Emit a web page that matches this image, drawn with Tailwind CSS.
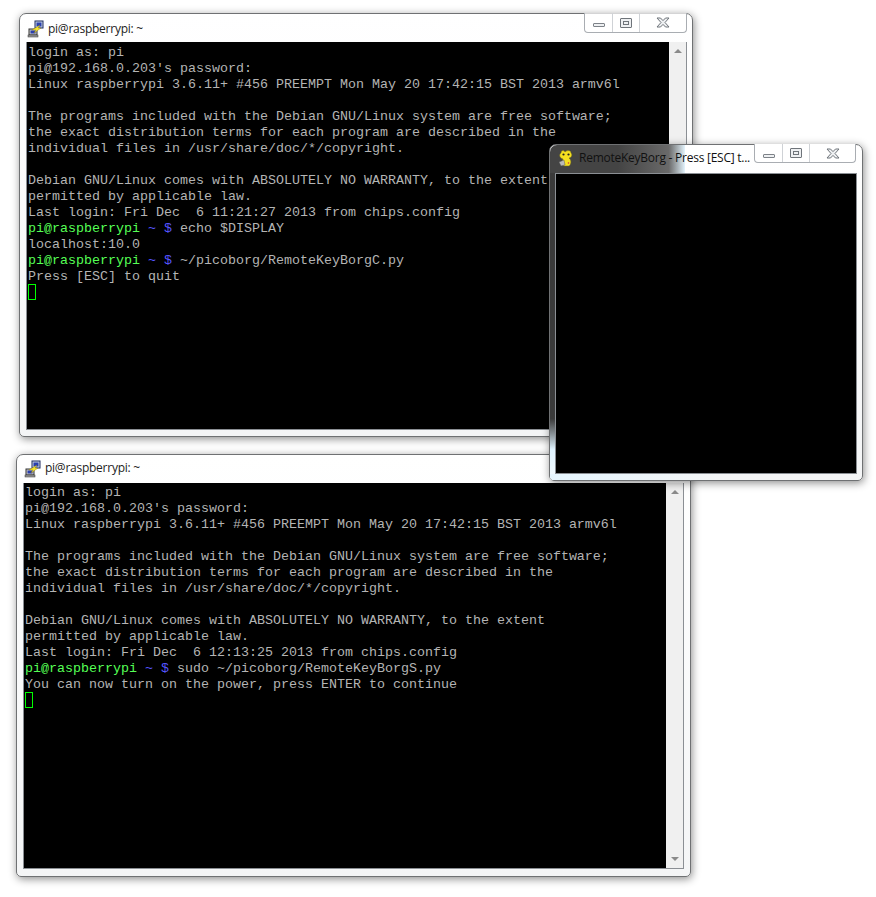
<!DOCTYPE html>
<html>
<head>
<meta charset="utf-8">
<script src="https://cdn.jsdelivr.net/npm/@tailwindcss/browser@4"></script>
</head>
<body class="bg-white">
<div class="relative w-[876px] h-[897px] overflow-hidden bg-white">

<!-- Window 1 -->
<section class="absolute left-[19px] top-[13px] w-[674px] h-[424px] rounded-t-[7px] rounded-b-[5px] border border-[#6f7173] bg-gradient-to-b from-white to-[#f4f5f6] shadow-[1px_2px_8px_rgba(0,0,0,0.45)] flex flex-col pl-[6px] pr-[5px] pb-[6px]">
  <header class="h-[28px] shrink-0 flex items-center gap-[3px] relative">
    <svg width="18" height="18" viewBox="0 0 18 18" class="shrink-0 ml-[1px] mt-[1px]"><rect x="8" y="1" width="8" height="7" fill="#c7d3e6" stroke="#1c2a5e"/><rect x="9.5" y="2.5" width="5" height="4" fill="#2a3fae"/><rect x="2" y="9" width="8" height="6" fill="#c9c9c9" stroke="#333"/><rect x="3.5" y="10.5" width="5" height="3" fill="#2a3fae"/><rect x="1" y="15" width="10" height="2" fill="#999" stroke="#333" stroke-width=".5"/><path d="M5 10 L13 5 L11 8 L14 8 L7 13 L9 10 Z" fill="#f7e62c" stroke="#8a7a10" stroke-width=".4"/></svg>
    <span class="font-['Open_Sans','Noto_Sans',sans-serif] text-[12px] text-[#222] tracking-[-0.25px] mt-[1px]">pi@raspberrypi: ~</span>
    <div class="absolute -top-px right-0 w-[103px] h-[20px] flex rounded-b-[4px] border border-t-0 border-[#a9adb2] bg-white/70">
      <div class="w-[28px] border-r border-[#cfd2d6] flex items-center justify-center"><div class="w-[12px] h-[4px] mt-[5px] rounded-[1px] border border-[#7d8288] bg-[#eef0f2]"></div></div>
      <div class="w-[27px] border-r border-[#cfd2d6] flex items-center justify-center"><div class="w-[12px] h-[10px] border border-[#6f747a] rounded-[1px] flex items-center justify-center bg-[#eef0f2]"><div class="w-[6px] h-[4px] border border-[#6f747a]"></div></div></div>
      <div class="flex-1 flex items-center justify-center"><svg width="14" height="11" viewBox="0 0 14 11"><path d="M1 1 L4.5 1 L7 3.6 L9.5 1 L13 1 L9 5.5 L13 10 L9.5 10 L7 7.4 L4.5 10 L1 10 L5 5.5 Z" fill="#eef0f2" stroke="#6f747a"/></svg></div>
    </div>
  </header>
  <div class="flex-1 flex min-h-0 border-b border-l border-[#8b8f94] border-r">
    <div class="flex-1 bg-black pl-px pt-[3px] font-['Liberation_Mono',monospace] text-[13.33px] leading-[16px] text-[#b4b4b4] [&>div]:whitespace-pre [&>div]:h-[16px]">
<div>login as: pi</div>
<div>pi@192.168.0.203's password:</div>
<div>Linux raspberrypi 3.6.11+ #456 PREEMPT Mon May 20 17:42:15 BST 2013 armv6l</div>
<div> </div>
<div>The programs included with the Debian GNU/Linux system are free software;</div>
<div>the exact distribution terms for each program are described in the</div>
<div>individual files in /usr/share/doc/*/copyright.</div>
<div> </div>
<div>Debian GNU/Linux comes with ABSOLUTELY NO WARRANTY, to the extent</div>
<div>permitted by applicable law.</div>
<div>Last login: Fri Dec  6 11:21:27 2013 from chips.config</div>
<div><span class="text-[#55ff55]">pi@raspberrypi</span> <span class="text-[#5555ff]">~ $</span> echo $DISPLAY</div>
<div>localhost:10.0</div>
<div><span class="text-[#55ff55]">pi@raspberrypi</span> <span class="text-[#5555ff]">~ $</span> ~/picoborg/RemoteKeyBorgC.py</div>
<div>Press [ESC] to quit</div>
<div class="w-[8px] -mt-px border border-[#00ff00]"></div>
    </div>
    <div class="w-[17px] shrink-0 bg-[#f0f0f0] flex flex-col items-center justify-between py-[7px]">
      <div class="w-0 h-0 border-x-[4px] border-x-transparent border-b-[4px] border-b-[#8a8a8a]"></div>
      <div class="w-0 h-0 border-x-[4px] border-x-transparent border-t-[4px] border-t-[#8a8a8a]"></div>
    </div>
  </div>
</section>

<!-- Window 2 -->
<section class="absolute left-[16px] top-[454px] w-[675px] h-[423px] rounded-t-[7px] rounded-b-[5px] border border-[#6f7173] bg-gradient-to-b from-white to-[#f4f5f6] shadow-[1px_2px_8px_rgba(0,0,0,0.45)] flex flex-col pl-[6px] pr-[6px] pb-[7px]">
  <header class="h-[28px] shrink-0 flex items-center gap-[3px]">
    <svg width="18" height="18" viewBox="0 0 18 18" class="shrink-0 ml-[1px] -mt-[1px]"><rect x="8" y="1" width="8" height="7" fill="#c7d3e6" stroke="#1c2a5e"/><rect x="9.5" y="2.5" width="5" height="4" fill="#2a3fae"/><rect x="2" y="9" width="8" height="6" fill="#c9c9c9" stroke="#333"/><rect x="3.5" y="10.5" width="5" height="3" fill="#2a3fae"/><rect x="1" y="15" width="10" height="2" fill="#999" stroke="#333" stroke-width=".5"/><path d="M5 10 L13 5 L11 8 L14 8 L7 13 L9 10 Z" fill="#f7e62c" stroke="#8a7a10" stroke-width=".4"/></svg>
    <span class="font-['Open_Sans','Noto_Sans',sans-serif] text-[12px] text-[#222] tracking-[-0.25px] -mt-[2px]">pi@raspberrypi: ~</span>
  </header>
  <div class="flex-1 flex min-h-0 border-b border-l border-[#8b8f94] border-r">
    <div class="flex-1 bg-black pl-px pt-[2px] font-['Liberation_Mono',monospace] text-[13.33px] leading-[16px] text-[#b4b4b4] [&>div]:whitespace-pre [&>div]:h-[16px]">
<div>login as: pi</div>
<div>pi@192.168.0.203's password:</div>
<div>Linux raspberrypi 3.6.11+ #456 PREEMPT Mon May 20 17:42:15 BST 2013 armv6l</div>
<div> </div>
<div>The programs included with the Debian GNU/Linux system are free software;</div>
<div>the exact distribution terms for each program are described in the</div>
<div>individual files in /usr/share/doc/*/copyright.</div>
<div> </div>
<div>Debian GNU/Linux comes with ABSOLUTELY NO WARRANTY, to the extent</div>
<div>permitted by applicable law.</div>
<div>Last login: Fri Dec  6 12:13:25 2013 from chips.config</div>
<div><span class="text-[#55ff55]">pi@raspberrypi</span> <span class="text-[#5555ff]">~ $</span> sudo ~/picoborg/RemoteKeyBorgS.py</div>
<div>You can now turn on the power, press ENTER to continue</div>
<div class="w-[8px] -mt-px border border-[#00ff00]"></div>
    </div>
    <div class="w-[17px] shrink-0 bg-[#f0f0f0] flex flex-col items-center justify-between py-[7px]">
      <div class="w-0 h-0 border-x-[4px] border-x-transparent border-b-[4px] border-b-[#8a8a8a]"></div>
      <div class="w-0 h-0 border-x-[4px] border-x-transparent border-t-[4px] border-t-[#8a8a8a]"></div>
    </div>
  </div>
</section>

<!-- Window 3 -->
<section class="absolute left-[549px] top-[144px] w-[314px] h-[337px] rounded-t-[7px] rounded-b-[5px] border border-[#6f7173] bg-gradient-to-b from-white to-[#f4f5f6] shadow-[1px_2px_8px_rgba(0,0,0,0.45)] flex flex-col pl-[5px] pr-[5px] pb-[6px]">
  <div class="absolute left-0 top-[28px] w-[5px] h-[307px] rounded-bl-[4px] bg-gradient-to-b from-[#3a3a3a] from-80% via-[#dff3ff] via-90% to-[#f4fbff]"></div>
  <div class="absolute left-0 bottom-0 w-[170px] h-[6px] rounded-bl-[4px] bg-gradient-to-r from-[#e6f6ff] to-transparent"></div>
  <header class="h-[28px] shrink-0 flex items-center gap-[5px] relative">
    <div class="absolute -left-[5px] top-0 w-[135px] h-[28px] rounded-tl-[7px] bg-gradient-to-r from-[#444444] from-50% via-[#6a6a6a] via-88% to-[#e3f3fc]"></div>
    <svg width="16" height="17" viewBox="0 0 16 17" class="relative shrink-0 ml-[3px] -mt-[2px]"><path d="M3 3 C3 0 6 0 7 2 C9 0 13 0 13 3 C15 5 13 8 11 8 C14 10 13 15 11 16 L6 16 C4 15 4 11 5 9 C1 8 1 4 3 3 Z" fill="#f5e020" stroke="#6a6420" stroke-width=".5"/><path d="M1 12 L6 10 L7 15 L3 16 Z" fill="#b9b9b9" stroke="#444" stroke-width=".4"/><circle cx="5.5" cy="4.5" r="1.1" fill="#222"/><circle cx="10.5" cy="4.5" r="1.1" fill="#222"/><circle cx="10.5" cy="13" r=".8" fill="#c33"/></svg>
    <span class="relative font-['Open_Sans','Noto_Sans',sans-serif] text-[12px] text-[#111] tracking-[-0.25px] -mt-[2px] whitespace-nowrap">RemoteKeyBorg - Press [ESC] t...</span>
    <div class="absolute -top-px right-[1px] w-[102px] h-[19px] flex rounded-b-[4px] border border-t-0 border-[#a9adb2] bg-white">
      <div class="w-[28px] border-r border-[#cfd2d6] flex items-center justify-center"><div class="w-[12px] h-[4px] mt-[5px] rounded-[1px] border border-[#7d8288] bg-[#eef0f2]"></div></div>
      <div class="w-[27px] border-r border-[#cfd2d6] flex items-center justify-center"><div class="w-[12px] h-[10px] border border-[#6f747a] rounded-[1px] flex items-center justify-center bg-[#eef0f2]"><div class="w-[6px] h-[4px] border border-[#6f747a]"></div></div></div>
      <div class="flex-1 flex items-center justify-center"><svg width="14" height="11" viewBox="0 0 14 11"><path d="M1 1 L4.5 1 L7 3.6 L9.5 1 L13 1 L9 5.5 L13 10 L9.5 10 L7 7.4 L4.5 10 L1 10 L5 5.5 Z" fill="#eef0f2" stroke="#6f747a"/></svg></div>
    </div>
  </header>
  <div class="flex-1 bg-black border border-[#8b8f94]"></div>
</section>

</div>
</body>
</html>
